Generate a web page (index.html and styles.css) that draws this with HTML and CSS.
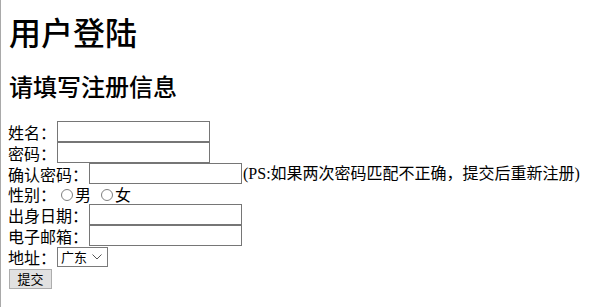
FILE: index.html
```html
<!DOCTYPE html>
<html lang="zh">
<head>
<meta charset="utf-8">
<title>用户登陆</title>
<link rel="stylesheet" href="styles.css">
</head>
<body>
<h1 class="title">用户登陆</h1>
<h2 class="subtitle">请填写注册信息</h2>
<form class="reg">
<div class="row">姓名：<input class="txt" type="text"></div>
<div class="row">密码：<input class="txt" type="password"></div>
<div class="row">确认密码：<input class="txt" type="password"><span class="note">(PS:如果两次密码匹配不正确，提交后重新注册)</span></div>
<div class="row row-radio">性别：<span class="radio"></span>男<span class="radio radio-second"></span>女</div>
<div class="row">出身日期：<input class="txt" type="text"></div>
<div class="row">电子邮箱：<input class="txt" type="text"></div>
<div class="row row-select">地址：<span class="select">广东<svg class="chev" width="10" height="6" viewBox="0 0 10 6"><path d="M0.5 0.5 L5 5 L9.5 0.5" fill="none" stroke="#555" stroke-width="1"/></svg></span></div>
<div class="row"><button class="btn" type="button">提交</button></div>
</form>
</body>
</html>
```
FILE: styles.css
```css
html {
  border-left: 1px solid #a9a9a9;
  min-height: 100%;
  box-sizing: border-box;
}
body {
  margin: 0 0 0 7px;
  padding-top: 1px;
  font-family: "Liberation Serif", "Noto Sans CJK SC", serif;
  font-size: 16px;
  color: #000;
}
.title {
  font-size: 32px;
  font-weight: 500;
  margin: 14px 0 0 1px;
  line-height: 38px;
  height: 38px;
}
.subtitle {
  font-size: 24px;
  font-weight: 500;
  margin: 19px 0 0 1px;
  line-height: 32px;
  height: 32px;
}
.reg {
  margin: 17px 0 0 0;
  font-family: "Noto Sans CJK SC", sans-serif;
}
.row {
  display: flex;
  align-items: center;
  height: 21px;
  line-height: 20px;
  white-space: nowrap;
}
.txt {
  box-sizing: border-box;
  width: 153px;
  height: 21px;
  margin: 0 0 0 1px;
  padding: 1px 2px;
  border: 1px solid #767676;
  background: #fff;
  border-radius: 0;
  outline: none;
}
.note {
  font-family: "Liberation Serif", "Noto Sans CJK SC", serif;
  margin-left: 1px;
}
.row-radio {
  height: 20px;
}
.radio {
  width: 10px;
  height: 10px;
  border: 1px solid #7f7f7f;
  border-radius: 50%;
  margin: 1px 2px 0 5px;
  background: #fff;
}
.radio-second {
  margin-left: 10px;
}
.row-select {
  height: 22px;
}
.select {
  display: inline-flex;
  align-items: center;
  box-sizing: border-box;
  height: 20px;
  width: 51px;
  border: 1px solid #7a7a7a;
  padding: 0 0 0 3px;
  margin-left: 1px;
  font-size: 13px;
  gap: 5px;
}
.btn {
  box-sizing: border-box;
  margin: 1px 0 0 1px;
  height: 20px;
  width: 43px;
  padding: 0;
  border: 1px solid #adadad;
  background: #e1e1e1;
  font-family: "Noto Sans CJK SC", sans-serif;
  font-size: 13px;
  line-height: 18px;
  color: #000;
}
```
